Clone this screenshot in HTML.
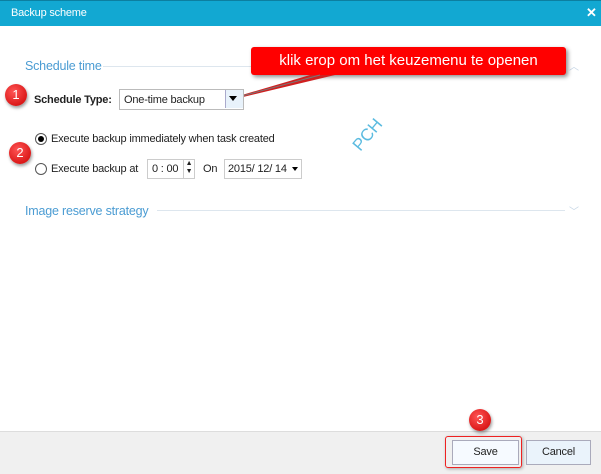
<!DOCTYPE html>
<html><head><style>
body{margin:0;width:601px;height:473px;position:relative;overflow:hidden;background:#fff;font-family:"Liberation Sans",sans-serif;font-size:11px;letter-spacing:-0.2px;color:#222}
.a{position:absolute;white-space:nowrap}
.badge{position:absolute;width:22px;height:22px;border-radius:50%;background:radial-gradient(circle at 40% 35%,#f55,#c00);color:#fff;font-size:13px;text-align:center;line-height:22px;box-shadow:1px 2px 3px rgba(0,0,0,.4);letter-spacing:0}
.radio{position:absolute;width:10px;height:10px;border:1px solid #555;border-radius:50%;background:#fff}
.box{position:absolute;border:1px solid #ccc;background:#fff}
</style></head><body>
<div class="a" style="left:0;top:0;width:601px;height:25px;background:#12a8d2;border-top:1px solid #0c7fa0"></div>
<div class="a" style="left:11px;top:7px;color:#fff;font-size:11px">Backup scheme</div>
<div class="a" style="left:586px;top:5px;color:#fff;font-size:13px;font-weight:bold">✕</div>

<div class="a" style="left:25px;top:59px;color:#4b9cd3;font-size:12.5px">Schedule time</div>
<div class="a" style="left:103px;top:66px;width:462px;height:1px;background:#dde6ee"></div>
<div class="a" style="left:569px;top:58px;color:#c5d5e5;font-size:10px">︿</div>

<div class="a" style="left:251px;top:47px;width:315px;height:28px;background:#f00;border-radius:3px;box-shadow:2px 2px 4px rgba(0,0,0,.45);color:#fff;font-size:15px;letter-spacing:0;text-align:center;line-height:28px">klik erop om het keuzemenu te openen</div>
<svg class="a" style="left:240px;top:70px" width="100" height="30"><polygon points="2,25 70,5 95,5 3,27" fill="#d02020"/><line x1="2" y1="26" x2="80" y2="5" stroke="#777" stroke-width="1"/></svg>

<div class="badge" style="left:5px;top:84px">1</div>
<div class="a" style="left:34px;top:94px;font-weight:bold">Schedule Type:</div>
<div class="box" style="left:119px;top:89px;width:123px;height:19px;border-color:#bbb"></div>
<div class="a" style="left:124px;top:94px">One-time backup</div>
<div class="a" style="left:225px;top:90px;width:17px;height:18px;background:#e8f2fb;border-left:1px solid #aac"></div>
<div class="a" style="left:229px;top:96px;border:4px solid transparent;border-top:5px solid #000"></div>

<div class="radio" style="left:35px;top:133px"></div>
<div class="a" style="left:38px;top:136px;width:6px;height:6px;border-radius:50%;background:#000"></div>
<div class="a" style="left:51px;top:133px">Execute backup immediately when task created</div>
<div class="badge" style="left:9px;top:142px">2</div>
<div class="radio" style="left:35px;top:163px"></div>
<div class="a" style="left:51px;top:163px">Execute backup at</div>
<div class="box" style="left:147px;top:159px;width:35px;height:18px"></div>
<div class="a" style="left:152px;top:163px">0 : 00</div>
<div class="box" style="left:183px;top:159px;width:10px;height:18px;font-size:7px;line-height:8px;text-align:center">▲<br>▼</div>
<div class="a" style="left:203px;top:163px">On</div>
<div class="box" style="left:224px;top:159px;width:76px;height:18px"></div>
<div class="a" style="left:228px;top:163px">2015/ 12/ 14</div>
<div class="a" style="left:292px;top:167px;border:3px solid transparent;border-top:4px solid #000"></div>

<div class="a" style="left:350px;top:125px;color:#5bbbe0;font-size:17px;transform:rotate(-50deg);letter-spacing:0">PCH</div>

<div class="a" style="left:25px;top:204px;color:#4b9cd3;font-size:12.5px">Image reserve strategy</div>
<div class="a" style="left:157px;top:210px;width:408px;height:1px;background:#dde6ee"></div>
<div class="a" style="left:569px;top:203px;color:#c5d5e5;font-size:10px">﹀</div>

<div class="a" style="left:0;top:431px;width:601px;height:42px;background:#f0f0f0;border-top:1px solid #ddd"></div>
<div class="badge" style="left:469px;top:409px">3</div>
<div class="a" style="left:445px;top:436px;width:75px;height:30px;border:1px solid #e22;border-radius:3px;box-shadow:1px 1px 3px rgba(0,0,0,.3)"></div>
<div class="a" style="left:452px;top:440px;width:65px;height:23px;border:1px solid #aab;background:#f6faff;text-align:center;line-height:23px">Save</div>
<div class="a" style="left:526px;top:440px;width:63px;height:23px;border:1px solid #aab;background:#eaf3fb;text-align:center;line-height:23px">Cancel</div>
</body></html>
